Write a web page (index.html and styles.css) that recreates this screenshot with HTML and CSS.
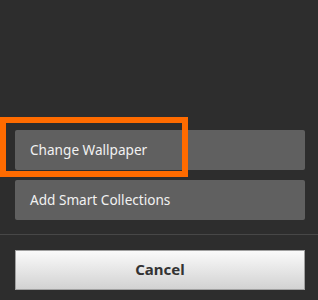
FILE: index.html
```html
<!DOCTYPE html>
<html lang="en">
  <head>
    <meta charset="UTF-8" />
    <meta name="viewport" content="width=device-width, initial-scale=1.0" />
    <title>Options</title>
    <link rel="stylesheet" href="styles.css">
  </head>
  <body>
    <div class="sheet">
      <div class="menu">
        <div class="menu-item highlighted">
          Change Wallpaper
          <span class="marker"></span>
        </div>
        <div class="menu-item">Add Smart Collections</div>
      </div>
      <div class="footer">
        <button class="btn-cancel">Cancel</button>
      </div>
    </div>
  </body>
</html>
```

FILE: styles.css
```css
body {
  margin: 0;
  padding: 0;
  background-color: #2d2d2d;
  font-family: "Noto Sans", "Open Sans", sans-serif;
}

.sheet {
  height: 300px;
  display: flex;
  flex-direction: column;
  justify-content: flex-end;
}

.menu {
  display: flex;
  flex-direction: column;
  gap: 10px;
  padding: 0 13px 14px 15px;
  border-bottom: 1px solid #474747;
}

.menu-item {
  position: relative;
  height: 40px;
  line-height: 40px;
  padding: 0 15px;
  background-color: #606060;
  border-radius: 2px;
  color: #f2f2f2;
  font-size: 13.6px;
}

.marker {
  position: absolute;
  left: -15px;
  top: -13px;
  width: 176px;
  height: 48px;
  border: 6px solid #ff6b00;
}

.footer {
  padding: 15px 13px 10px 15px;
}

.btn-cancel {
  display: block;
  width: 100%;
  height: 40px;
  padding: 0 0 2px;
  border: 1px solid #a0a0a0;
  border-radius: 0;
  background: linear-gradient(#fafafa, #d2d2d2);
  color: #333;
  font-family: inherit;
  font-size: 15px;
  font-weight: bold;
  cursor: pointer;
}
```
